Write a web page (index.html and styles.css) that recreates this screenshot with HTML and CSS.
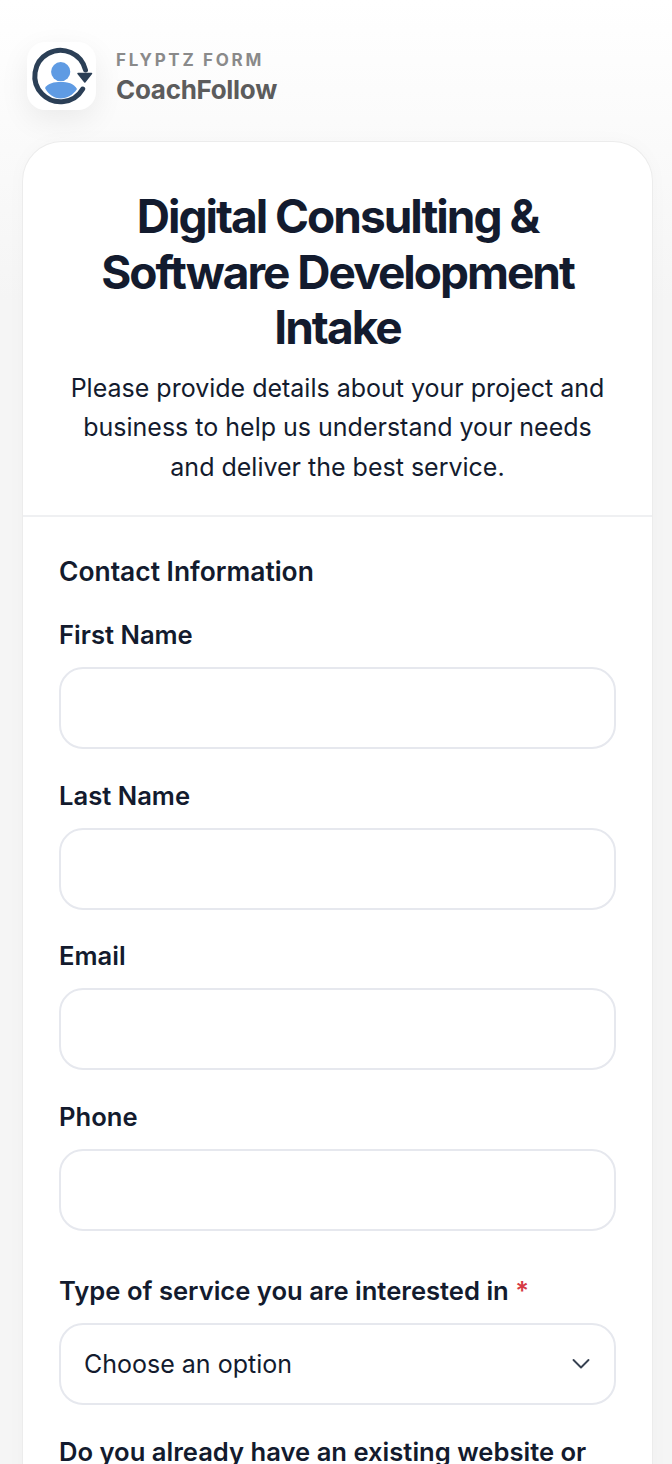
FILE: index.html
```html
<!DOCTYPE html>
<html lang="en">
<head>
    <meta charset="UTF-8">
    <meta name="viewport" content="width=device-width, initial-scale=1.0">
    <title>Digital Consulting &amp; Software Development Intake</title>
    <link rel="stylesheet" href="styles.css">
</head>
<body>

    <header class="brand">
        <div class="brand-logo">
            <svg width="69" height="68" viewBox="0 0 69 68" fill="none">
                <circle cx="33.7" cy="29.7" r="9.6" fill="#5f9be3"/>
                <path d="M18 46 C21 41 27 40 33.7 40 C41 40 46.5 41 50 47 C46 53 40 56.5 33.7 56.5 C27 56.5 21 52 18 46 Z" fill="#5f9be3"/>
                <path d="M55.7 47 A25.7 25.7 0 1 1 58.5 28" stroke="#2b3f56" stroke-width="5" stroke-linecap="round"/>
                <path d="M51 31.5 L64.5 31.5 L57.8 40 Z" fill="#2b3f56" stroke="#2b3f56" stroke-width="1.5" stroke-linejoin="round"/>
            </svg>
        </div>
        <div class="brand-text">
            <div class="brand-label">FLYPTZ FORM</div>
            <div class="brand-name">CoachFollow</div>
        </div>
    </header>

    <main class="form-card">
        <div class="form-head">
            <h1>Digital Consulting &amp; Software Development Intake</h1>
            <p>Please provide details about your project and business to help us understand your needs and deliver the best service.</p>
        </div>

        <form class="form-body">
            <h2>Contact Information</h2>
            <div class="form-group">
                <label for="firstName">First Name</label>
                <input type="text" id="firstName">
            </div>
            <div class="form-group">
                <label for="lastName">Last Name</label>
                <input type="text" id="lastName">
            </div>
            <div class="form-group">
                <label for="email">Email</label>
                <input type="text" id="email">
            </div>
            <div class="form-group">
                <label for="phone">Phone</label>
                <input type="text" id="phone">
            </div>
            <div class="form-group form-group-next">
                <label for="service">Type of service you are interested in <span class="required">*</span></label>
                <div class="select-box" id="service">
                    <span>Choose an option</span>
                    <svg width="20" height="20" viewBox="0 0 20 20" fill="none">
                        <path d="M2.5 6 L10 13.5 L17.5 6" stroke="#374151" stroke-width="1.9" stroke-linecap="round" stroke-linejoin="round"/>
                    </svg>
                </div>
            </div>
            <div class="form-group">
                <label>Do you already have an existing website or</label>
            </div>
        </form>
    </main>

</body>
</html>
```

FILE: styles.css
```css
* {
    box-sizing: border-box;
}
html, body {
    height: 1464px;
    overflow: hidden;
}
body {
    display: flex;
    flex-direction: column;
    margin: 0;
    padding: 42px 19px 0 22px;
    font-family: Inter, sans-serif;
    color: #131b2e;
    background: linear-gradient(180deg, #ffffff 0, #f5f5f5 300px);
}
.brand {
    display: flex;
    align-items: center;
    gap: 20px;
    margin: 0 0 31px 5px;
}
.brand-logo {
    width: 69px;
    height: 68px;
    background: #ffffff;
    border-radius: 18px;
    box-shadow: 0 10px 30px rgba(0,0,0,0.07);
}
.brand-logo svg {
    display: block;
}
.brand-text {
    padding-top: 6px;
}
.brand-label {
    font-size: 17px;
    font-weight: 700;
    letter-spacing: 2.7px;
    line-height: 20px;
    color: #8a8a8a;
}
.brand-name {
    font-size: 26px;
    font-weight: 700;
    line-height: 36px;
    letter-spacing: -0.3px;
    color: #5c5c5c;
    margin-top: 2px;
}
.form-card {
    flex: 1;
    background: #ffffff;
    border: 1px solid #ececec;
    border-bottom: 0;
    border-radius: 40px 40px 0 0;
    box-shadow: 0 0 20px rgba(0,0,0,0.025);
}
.form-head {
    padding: 47px 36px 28px;
    text-align: center;
    border-bottom: 2px solid #eff0f2;
}
.form-head h1 {
    margin: 0 0 13px;
    font-size: 46px;
    font-weight: 700;
    line-height: 55.5px;
    letter-spacing: -2px;
}
.form-head p {
    margin: 0;
    font-size: 25px;
    line-height: 39.5px;
}
.form-body {
    padding: 35px 36px 0;
}
.form-body h2 {
    margin: 0 0 26px;
    font-size: 26.4px;
    font-weight: 600;
    line-height: 38px;
}
.form-group {
    margin-bottom: 27.67px;
}
.form-group-next {
    margin-top: 41px;
}
label {
    display: block;
    margin-bottom: 13px;
    font-size: 25.6px;
    font-weight: 600;
    line-height: 38px;
}
.required {
    color: #d63a44;
}
input[type="text"], .select-box {
    display: block;
    width: 100%;
    height: 82px;
    padding: 0 23px;
    background: #ffffff;
    border: 2px solid #e6e8ee;
    border-radius: 24px;
}
.select-box {
    display: flex;
    align-items: center;
    justify-content: space-between;
    font-size: 25px;
}
```
